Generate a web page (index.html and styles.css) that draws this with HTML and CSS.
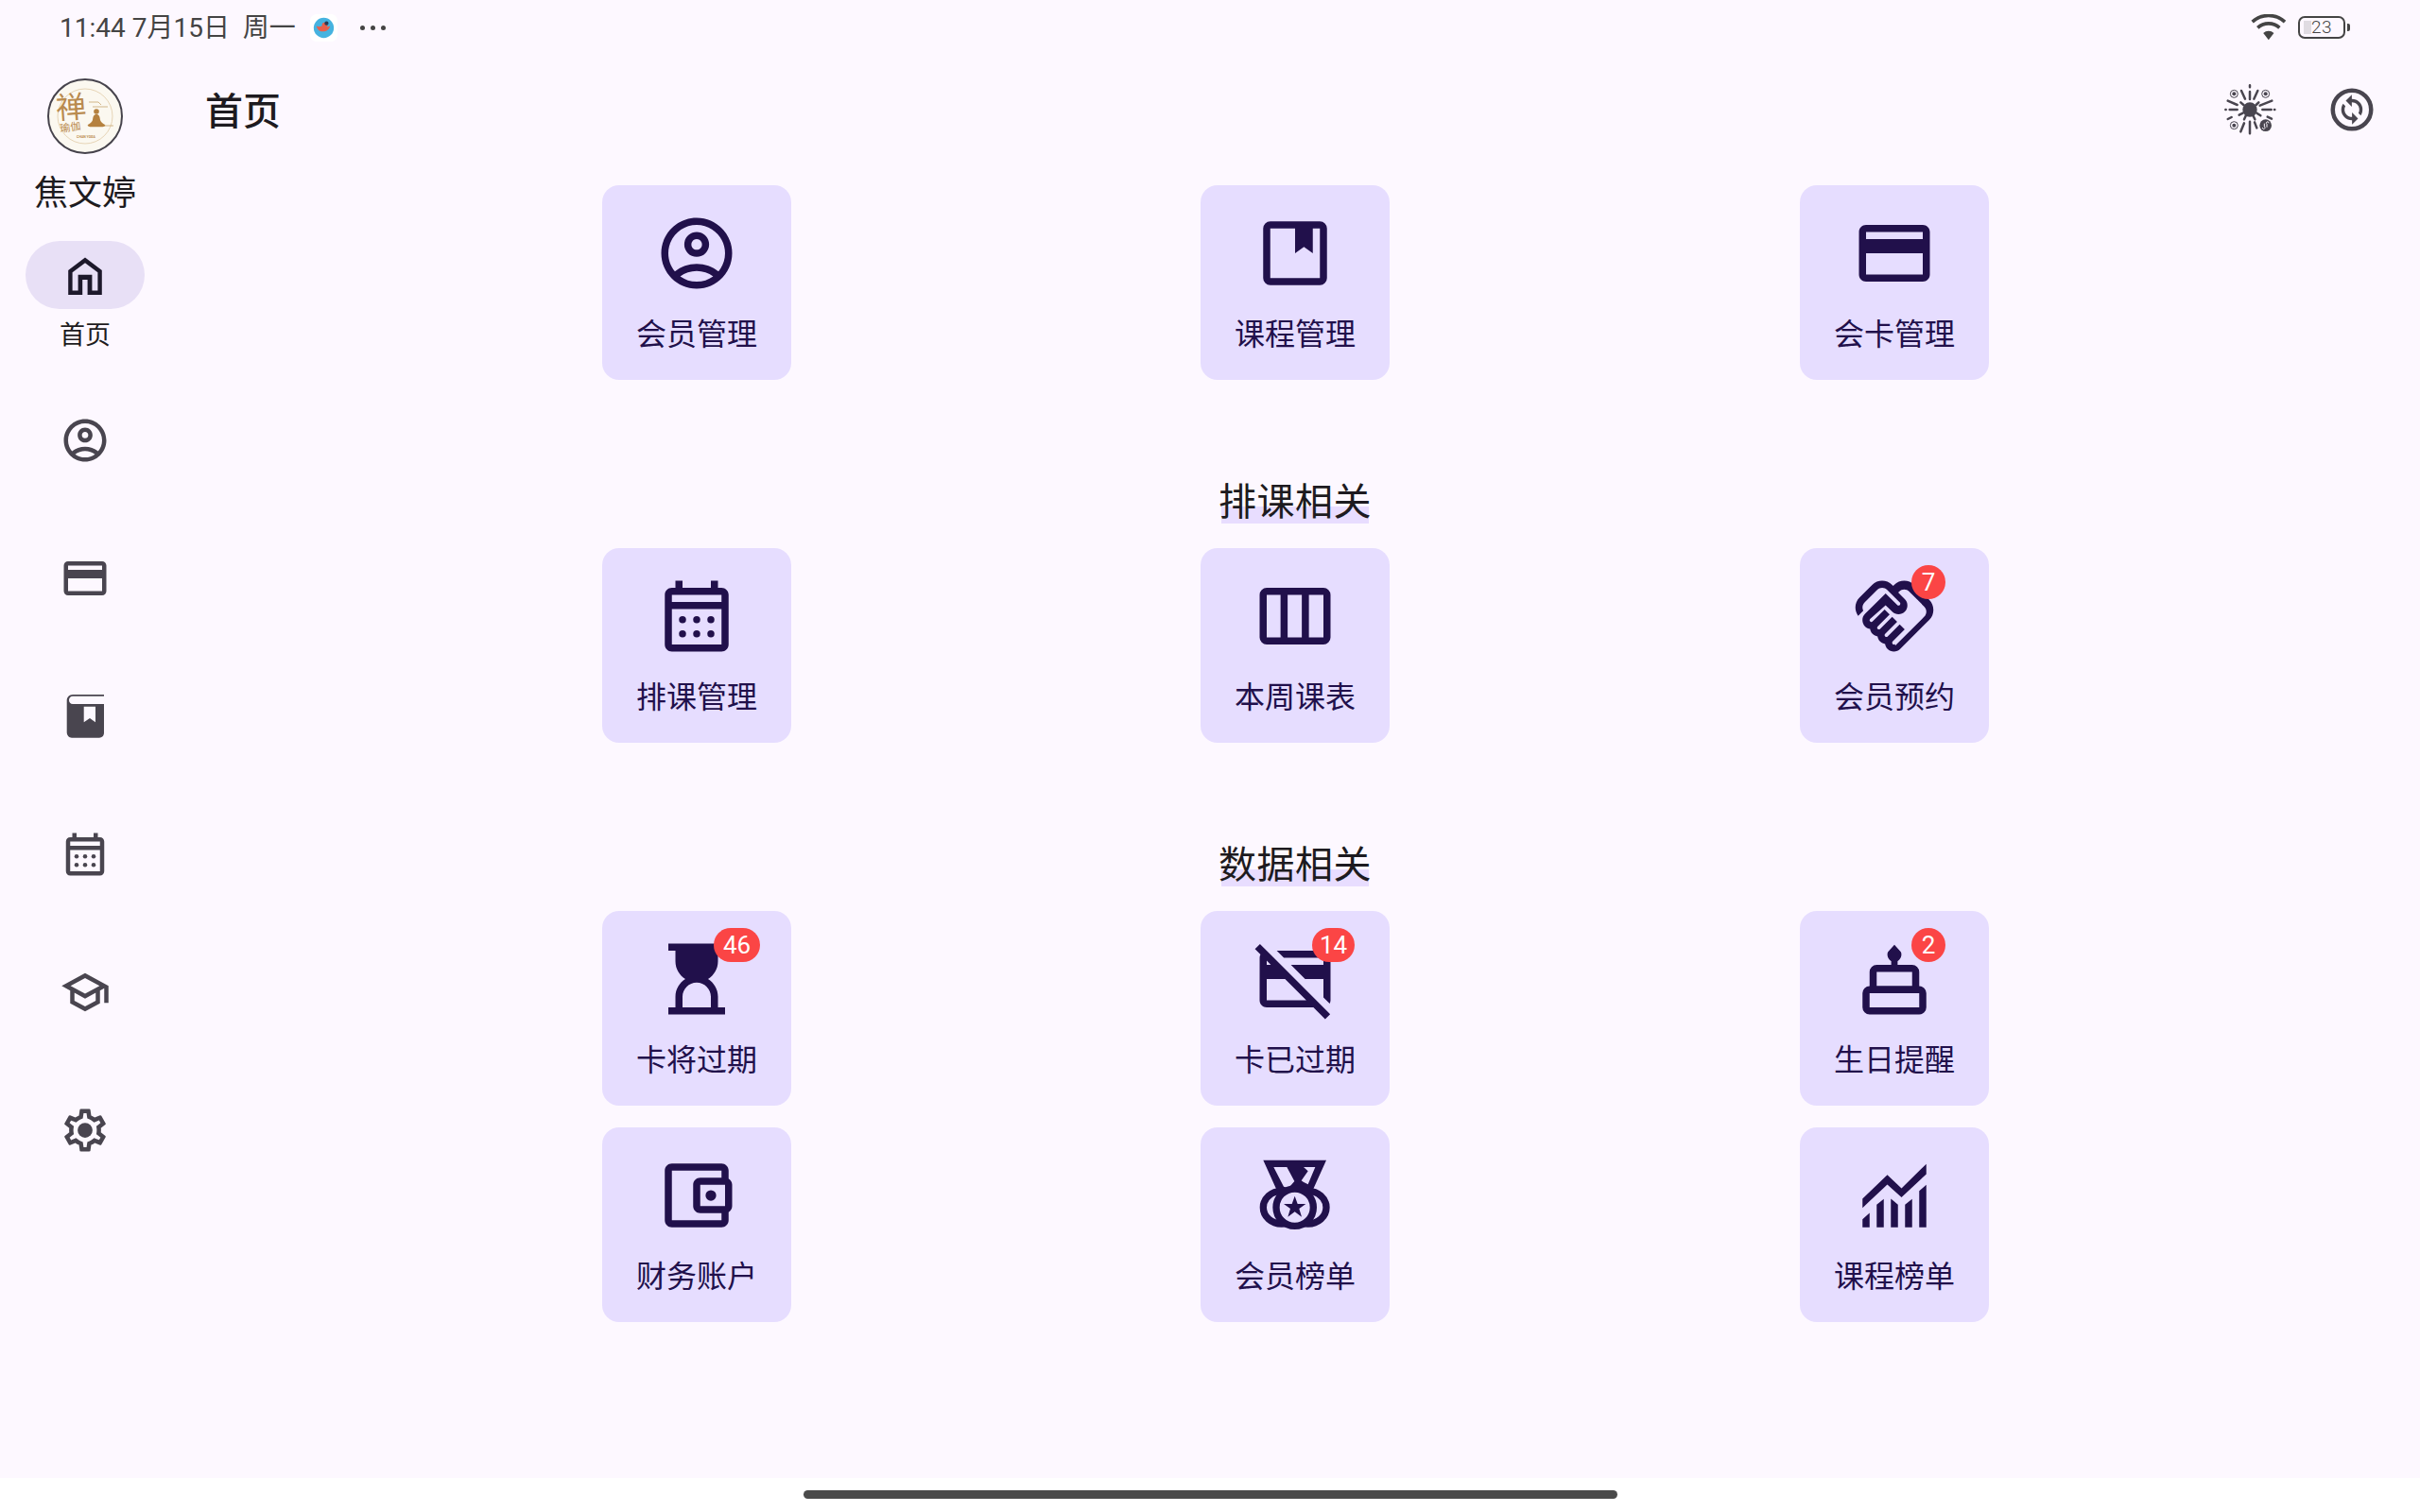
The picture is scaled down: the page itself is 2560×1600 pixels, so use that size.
FILE: index.html
```html
<!DOCTYPE html>
<html lang="zh">
<head>
<meta charset="utf-8">
<title>首页</title>
<link rel="stylesheet" href="styles.css">
</head>
<body>
<div class="screen">
  <div class="app">
    <div class="statusbar">
      <div class="status-left">
        <span class="clock">11:44 7月15日&nbsp; 周一</span>
        <svg class="app-icon" viewBox="0 0 30 30"><rect width="30" height="30" rx="7" fill="#fff"/><circle cx="15" cy="15" r="11" fill="#45b3e0"/><path d="M7 13c1 4 3 6 7 6s7-2 8-6l-3 1c0-3-1-5-3-5s-3 1-3 4c-2 1-4 1-6 0z" fill="#e8604c"/><circle cx="18" cy="10" r="2.2" fill="#2b3a55"/></svg>
        <span class="more"><i></i><i></i><i></i></span>
      </div>
      <div class="status-right">
        <svg class="wifi" viewBox="240 48 115 84"><g fill="none" stroke="#444" stroke-width="11"><path d="M245 72a78 78 0 0 1 104 0"/><path d="M262 91a52 52 0 0 1 70 0"/></g><path d="M280 108a26 26 0 0 1 34 0l-17 22z" fill="#444"/></svg>
        <div class="battery"><span class="battery-level"></span><span class="battery-num">23</span></div>
        <span class="battery-nub"></span>
      </div>
    </div>
    <div class="layout">
      <aside class="rail">
        <svg class="logo" viewBox="0 0 80 80">
          <circle cx="40" cy="40" r="39" fill="#fbf8f0" stroke="#46434c" stroke-width="2"/>
          <circle cx="40" cy="40" r="29" fill="none" stroke="#dcc49c" stroke-width=".7"/>
          <text x="0" y="0" class="logo-zen" fill="#b98a4e" transform="translate(10 43) rotate(-4)">禅</text>
          <text x="0" y="0" class="logo-yu" fill="#b98a4e" transform="translate(14 57) rotate(-8)">瑜伽</text>
          <text x="41" y="63" class="logo-en" fill="#b98a4e">CHAN YOGA</text>
          <path d="M44 25h10l3 3M48 30h16M58 50h12" fill="none" stroke="#c8a56e" stroke-width=".8"/>
          <circle cx="52" cy="35" r="2.800" fill="#b5813f"/>
          <path d="M52 38c3 0 3.500 2.500 4 6 .5 2 2 3 5 5 1 1.200-1 2.200-3 2.200H46c-2 0-4-1-3-2.200 3-2 4.500-3 5-5 .5-3.500 1-6 4-6z" fill="#b5813f"/>
        </svg>
        <div class="user-name">焦文婷</div>
        <nav class="nav">
          <div class="nav-item nav-item-active">
            <span class="nav-pill">
              <svg class="icon-home" viewBox="0 0 24 24"><path fill-rule="evenodd" d="M12 2.800l8.900 6.700V22.500h-7.600v-8h-2.700v8H3.100V9.500zM12 5.600l-6.700 5V20.300h3V11.900h7.400v8.400h3V10.600z"/></svg>
            </span>
            <span class="nav-label">首页</span>
          </div>
          <div class="nav-item">
            <svg class="icon-nav" viewBox="0 0 24 24"><path d="M12 2C6.480 2 2 6.480 2 12s4.480 10 10 10 10-4.480 10-10S17.520 2 12 2zM7.350 18.500C8.660 17.560 10.260 17 12 17s3.340.56 4.650 1.500c-1.310.94-2.910 1.500-4.650 1.500s-3.340-.56-4.650-1.500zm10.790-1.380C16.450 15.800 14.320 15 12 15s-4.450.8-6.140 2.120C4.700 15.730 4 13.950 4 12c0-4.420 3.580-8 8-8s8 3.580 8 8c0 1.950-.7 3.730-1.860 5.120z"/><path d="M12 6c-1.930 0-3.500 1.570-3.500 3.500S10.070 13 12 13s3.500-1.570 3.500-3.500S13.930 6 12 6zm0 5c-.83 0-1.500-.67-1.500-1.500S11.170 8 12 8s1.500.67 1.500 1.500S12.830 11 12 11z"/></svg>
          </div>
          <div class="nav-item">
            <svg class="icon-nav" viewBox="0 0 24 24"><path d="M20 4H4c-1.110 0-1.990.89-1.990 2L2 18c0 1.110.89 2 2 2h16c1.110 0 2-.89 2-2V6c0-1.110-.89-2-2-2zm0 14H4v-6h16v6zm0-10H4V6h16v2z"/></svg>
          </div>
          <div class="nav-item">
            <svg class="icon-book" viewBox="0 0 48 48"><path fill-rule="evenodd" d="M44 1H11C7.500 1 4.700 3.800 4.700 7.300V41c0 3 2.300 5.700 5.300 5.700h29c3 0 5-2.200 5-5.200V11H11C8.500 11 7 9 7 7c0-2.500 1.500-4.200 4-4.200h33zM22.700 13.700H35v16.600L29 26l-6.300 4.300z"/></svg>
          </div>
          <div class="nav-item">
            <svg class="icon-nav" viewBox="0 0 24 24"><path d="M19 4h-1V2h-2v2H8V2H6v2H5c-1.110 0-1.990.9-1.990 2L3 20c0 1.100.89 2 2 2h14c1.100 0 2-.9 2-2V6c0-1.100-.9-2-2-2zm0 16H5V10h14v10zm0-12H5V6h14v2z"/><circle cx="8" cy="13" r="1"/><circle cx="12" cy="13" r="1"/><circle cx="16" cy="13" r="1"/><circle cx="8" cy="17" r="1"/><circle cx="12" cy="17" r="1"/><circle cx="16" cy="17" r="1"/></svg>
          </div>
          <div class="nav-item">
            <svg class="icon-nav" viewBox="0 0 24 24"><path d="M12 3L1 9l4 2.180v6L12 21l7-3.820v-6l2-1.090V17h2V9L12 3zm6.820 6L12 12.720 5.180 9 12 5.280 18.820 9zM17 15.990l-5 2.730-5-2.730v-3.720L12 15l5-2.730v3.720z"/></svg>
          </div>
          <div class="nav-item">
            <svg class="icon-nav" viewBox="0 0 24 24"><path d="M19.430 12.980c.04-.32.07-.64.07-.98 0-.34-.03-.66-.07-.98l2.110-1.650c.19-.15.24-.42.12-.64l-2-3.460c-.09-.16-.26-.25-.44-.25-.06 0-.12.01-.17.03l-2.490 1c-.52-.4-1.080-.73-1.690-.98l-.38-2.650C14.460 2.180 14.250 2 14 2h-4c-.25 0-.46.18-.49.42l-.38 2.650c-.61.25-1.170.59-1.690.98l-2.490-1c-.06-.02-.12-.03-.18-.03-.17 0-.34.09-.43.25l-2 3.460c-.13.22-.07.49.12.64l2.110 1.650c-.04.32-.07.65-.07.98 0 .33.03.66.07.98l-2.110 1.650c-.19.15-.24.42-.12.64l2 3.460c.09.16.26.25.44.25.06 0 .12-.01.17-.03l2.490-1c.52.4 1.080.73 1.690.98l.38 2.650c.03.24.24.42.49.42h4c.25 0 .46-.18.49-.42l.38-2.650c.61-.25 1.170-.59 1.690-.98l2.490 1c.06.02.12.03.18.03.17 0 .34-.09.43-.25l2-3.460c.12-.22.07-.49-.12-.64l-2.110-1.650zm-1.980-1.710c.04.31.05.52.05.73 0 .21-.02.43-.05.73l-.14 1.130.89.7 1.080.84-.7 1.210-1.270-.51-1.040-.42-.9.68c-.43.32-.84.56-1.250.73l-1.060.43-.16 1.130-.2 1.350h-1.400l-.19-1.350-.16-1.130-1.060-.43c-.43-.18-.83-.41-1.230-.71l-.91-.7-1.060.43-1.270.51-.7-1.210 1.080-.84.89-.7-.14-1.130c-.03-.31-.05-.54-.05-.74s.02-.43.05-.73l.14-1.130-.89-.7-1.080-.84.7-1.210 1.270.51 1.040.42.9-.68c.43-.32.84-.56 1.250-.73l1.060-.43.16-1.130.2-1.350h1.390l.19 1.350.16 1.130 1.060.43c.43.18.83.41 1.230.71l.91.7 1.060-.43 1.270-.51.7 1.210-1.070.85-.89.7.14 1.130z"/><circle cx="12" cy="12" r="3.500"/></svg>
          </div>
        </nav>
      </aside>
      <main class="content">
        <header class="topbar">
          <h1 class="page-title">首页</h1>
          <div class="top-actions">
            <svg class="icon-firework" viewBox="156 263 168 168">
              <g fill="none" stroke="#49454f" stroke-width="7.500" stroke-linecap="round">
                <path d="M240 270v6M240 290v24M213 287l12 26M265 287l-12 26M170 319l30 13M310 319l-38 15M163 347h1M176 347h24M280 347h28M318 347h1M170 377l12-6M296 370l13 6M240 385v38M222 390l-11 27M255 387l7 18M211 324l9 8M268 324l-8 8M206 364l12-6M274 366l-12-8M222 378l6-13M256 378l-6-13"/>
              </g>
              <circle cx="240" cy="347" r="23" fill="#49454f"/>
              <g fill="none" stroke="#49454f" stroke-width="3"><circle cx="190" cy="297" r="12"/><circle cx="290" cy="297" r="12"/><circle cx="190" cy="397" r="12"/></g>
              <g fill="#49454f"><circle cx="190" cy="297" r="6"/><circle cx="290" cy="297" r="6"/><circle cx="190" cy="397" r="6"/><circle cx="290" cy="397" r="19"/></g>
              <path d="M280 404a4 4 0 1 0 6-3v-10M300 390a4 4 0 1 0-6 3v10" fill="none" stroke="#fdf8ff" stroke-width="3"/>
            </svg>
            <svg class="icon-nav" viewBox="0 0 24 24"><circle cx="12" cy="12" r="9" fill="none" stroke="currentColor" stroke-width="2"/><path d="M12.060 19v-2.010H12c-1.280 0-2.560-.49-3.540-1.460-1.710-1.710-1.920-4.350-.64-6.290l1.100 1.100c-.71 1.330-.53 3.010.59 4.130.7.7 1.620 1.030 2.540 1.010v-2.140l2.830 2.830L12.060 19zm4.110-4.240l-1.100-1.100c.71-1.330.53-3.010-.59-4.130C13.790 8.840 12.900 8.500 12 8.500h-.06v2.150L9.110 7.830 11.940 5v2.020c1.300-.02 2.610.45 3.600 1.450 1.700 1.700 1.910 4.340.63 6.290z"/></svg>
          </div>
        </header>
        <div class="grid">
          <a class="card"><svg class="card-icon" viewBox="0 0 24 24"><path d="M12 2C6.480 2 2 6.480 2 12s4.480 10 10 10 10-4.480 10-10S17.520 2 12 2zM7.350 18.500C8.660 17.560 10.260 17 12 17s3.340.56 4.650 1.500c-1.310.94-2.910 1.500-4.650 1.500s-3.340-.56-4.650-1.500zm10.790-1.380C16.450 15.800 14.320 15 12 15s-4.450.8-6.140 2.120C4.700 15.730 4 13.950 4 12c0-4.420 3.580-8 8-8s8 3.580 8 8c0 1.950-.7 3.730-1.860 5.120z"/><path d="M12 6c-1.930 0-3.500 1.570-3.500 3.500S10.070 13 12 13s3.500-1.570 3.500-3.500S13.930 6 12 6zm0 5c-.83 0-1.500-.67-1.500-1.500S11.170 8 12 8s1.500.67 1.500 1.500S12.830 11 12 11z"/></svg><span class="card-label">会员管理</span></a>
          <a class="card"><svg class="card-icon" viewBox="0 0 24 24"><rect x="4" y="4" width="16" height="16" rx="1" fill="none" stroke="currentColor" stroke-width="2"/><path d="M12 4h5v8l-2.500-1.800L12 12z"/></svg><span class="card-label">课程管理</span></a>
          <a class="card"><svg class="card-icon" viewBox="0 0 24 24"><path d="M20 4H4c-1.110 0-1.990.89-1.990 2L2 18c0 1.110.89 2 2 2h16c1.110 0 2-.89 2-2V6c0-1.110-.89-2-2-2zm0 14H4v-6h16v6zm0-10H4V6h16v2z"/></svg><span class="card-label">会卡管理</span></a>

          <div class="section-title"><span>排课相关</span></div>

          <a class="card"><svg class="card-icon" viewBox="0 0 24 24"><path d="M19 4h-1V2h-2v2H8V2H6v2H5c-1.110 0-1.990.9-1.990 2L3 20c0 1.100.89 2 2 2h14c1.100 0 2-.9 2-2V6c0-1.100-.9-2-2-2zm0 16H5V10h14v10zm0-12H5V6h14v2z"/><circle cx="8" cy="13" r="1"/><circle cx="12" cy="13" r="1"/><circle cx="16" cy="13" r="1"/><circle cx="8" cy="17" r="1"/><circle cx="12" cy="17" r="1"/><circle cx="16" cy="17" r="1"/></svg><span class="card-label">排课管理</span></a>
          <a class="card"><svg class="card-icon" viewBox="0 0 24 24"><rect x="3" y="5" width="18" height="14" rx="1" fill="none" stroke="currentColor" stroke-width="2"/><path d="M7.900 5h2v14h-2zM13.900 5h2v14h-2z"/></svg><span class="card-label">本周课表</span></a>
          <a class="card"><svg class="card-icon" viewBox="0 0 24 24"><path d="M12.220 19.850c-.18.18-.5.21-.71 0-.18-.18-.21-.5 0-.71l3.390-3.390-1.410-1.410-3.390 3.390c-.19.2-.51.19-.71 0-.21-.21-.18-.53 0-.71l3.390-3.390-1.410-1.410-3.390 3.390c-.18.18-.5.21-.71 0-.19-.19-.19-.51 0-.71l3.390-3.390-1.420-1.410-3.390 3.390c-.18.18-.5.21-.71 0-.19-.2-.19-.51 0-.71L9.520 8.900l1.870 1.860c.95.95 2.590.94 3.540 0 .98-.98.98-2.560 0-3.540l-1.860-1.860.28-.28c.78-.78 2.050-.78 2.830 0l4.240 4.240c.78.78.78 2.050 0 2.830l-8.200 8.200zm9.610-6.780c1.560-1.560 1.560-4.090 0-5.660l-4.240-4.240c-1.560-1.560-4.090-1.560-5.660 0l-.28.28-.28-.28c-1.560-1.560-4.090-1.560-5.660 0L2.170 6.710c-1.420 1.420-1.550 3.630-.4 5.190l1.450-1.450c-.39-.75-.26-1.700.37-2.330l3.540-3.540c.78-.78 2.050-.78 2.830 0l3.560 3.560c.18.18.21.5 0 .71-.21.21-.53.18-.71 0L9.520 5.570l-5.800 5.790c-.98.97-.98 2.560 0 3.540.39.39.89.63 1.420.7.07.52.3 1.020.7 1.420.4.4.9.63 1.420.7.07.52.3 1.020.7 1.420.4.4.9.63 1.420.7.07.54.31 1.030.7 1.420.47.47 1.100.73 1.770.73.67 0 1.300-.26 1.770-.73l8.210-8.190z"/></svg><span class="card-label">会员预约</span><span class="badge">7</span></a>

          <div class="section-title"><span>数据相关</span></div>

          <a class="card"><svg class="card-icon" viewBox="0 0 24 24"><path fill-rule="evenodd" d="M4 2h16v2h-2v3c0 2.200-1.200 4-2.800 5 1.600 1 2.800 2.800 2.800 5v3h2v2H4v-2h2v-3c0-2.200 1.200-4 2.800-5C7.200 11 6 9.200 6 7V4H4zM8 20h8v-3c0-2.200-1.800-4-4-4s-4 1.800-4 4z"/></svg><span class="card-label">卡将过期</span><span class="badge">46</span></a>
          <a class="card"><svg class="card-icon" viewBox="0 0 24 24"><path d="M6.830 4H20c1.110 0 2 .89 2 2v12c0 .34-.08.66-.23.94L20 17.170V12h-5.170l-4-4H20V6H8.830l-2-2zm13.660 19.310L17.170 20H4c-1.110 0-2-.89-2-2l.01-12c0-.34.08-.66.23-.93L.69 3.510 2.100 2.100l19.800 19.800-1.410 1.410zM4 6.830V8h1.170L4 6.830zM15.170 18l-6-6H4v6h11.170z"/></svg><span class="card-label">卡已过期</span><span class="badge badge-narrow">14</span></a>
          <a class="card"><svg class="card-icon" viewBox="0 0 24 24"><path d="M12 2.300l1.800 2c.6 1.100-.4 2.900-1.800 2.900s-2.400-1.800-1.800-2.900zM11.100 6.500h1.800V9h-1.800z"/><g fill="none" stroke="currentColor" stroke-width="2"><rect x="6" y="9" width="12" height="6" rx="1"/><rect x="4" y="15" width="16" height="6" rx="1"/></g></svg><span class="card-label">生日提醒</span><span class="badge">2</span></a>

          <a class="card"><svg class="card-icon" viewBox="0 0 24 24"><path d="M21 7.280V5c0-1.100-.9-2-2-2H5c-1.110 0-2 .9-2 2v14c0 1.100.89 2 2 2h14c1.100 0 2-.9 2-2v-2.280c.59-.35 1-.98 1-1.720V9c0-.74-.41-1.380-1-1.720zM20 9v6h-7V9h7zM5 19V5h14v2h-6c-1.100 0-2 .9-2 2v6c0 1.100.9 2 2 2h6v2H5z"/><circle cx="16" cy="12" r="1.500"/></svg><span class="card-label">财务账户</span></a>
          <a class="card"><svg class="card-icon" viewBox="16 15 270 270"><path fill-rule="evenodd" d="M50 38h200l-45 100H95zM83 60h42l24 45-19 22-15-5zM178 60h37l-23 55-15-8-6-4 21-30z"/><g fill="none" stroke="currentColor" stroke-width="22"><ellipse cx="108" cy="188" rx="58" ry="52"/><ellipse cx="192" cy="188" rx="58" ry="52"/></g><circle cx="150" cy="188" r="59" fill="#e6ddff" stroke="currentColor" stroke-width="22"/><path d="M150 152l9 25h26l-21 15 8 26-22-16-22 16 8-26-21-15h26z"/></svg><span class="card-label">会员榜单</span></a>
          <a class="card"><svg class="card-icon" viewBox="0 0 24 24"><path d="M3 12.900l7-6.700 4 3.800 7-6.900v2.900l-7 6.500-4-3.600-7 6.600zM3 18.700l2-1.800V21H3zM7 14.600l2-1.600V21H7zM11 12.900l2 1.700V21h-2zM15 14.600l2-1.600V21h-2zM19 10.700l2-1.700V21h-2z"/></svg><span class="card-label">课程榜单</span></a>
        </div>
      </main>
    </div>
  </div>
  <div class="gesture"><span class="gesture-bar"></span></div>
</div>
</body>
</html>
```

FILE: styles.css
```css
* { box-sizing: border-box; }
html, body { margin: 0; padding: 0; }
body {
  width: 2560px;
  height: 1600px;
  overflow: hidden;
  background: #fff;
  font-family: "Noto Sans CJK SC", "Noto Sans", sans-serif;
  color: #1d1b20;
}
.screen { width: 2560px; height: 1600px; display: flex; flex-direction: column; }
.app { height: 1564px; background: #fdf8ff; display: flex; flex-direction: column; }

.statusbar {
  height: 58px;
  flex: none;
  display: flex;
  align-items: center;
  justify-content: space-between;
  padding: 0 74px 0 63px;
  color: #444;
}
.status-left { display: flex; align-items: center; }
.clock { font: 400 28px/58px Roboto, "Noto Sans CJK SC", sans-serif; width: 265px; padding-top: 2px; white-space: nowrap; }
.app-icon { width: 29px; height: 29px; display: block; }
.more { display: flex; gap: 6px; margin-left: 24px; }
.more i { width: 5px; height: 5px; border-radius: 50%; background: #444; display: block; }
.status-right { display: flex; align-items: center; }
.wifi { width: 38px; height: 28px; display: block; margin-right: 12px; }
.battery {
  position: relative;
  width: 50px;
  height: 24px;
  border: 2px solid #444;
  border-radius: 7px;
  display: flex;
  align-items: center;
  justify-content: center;
}
.battery-level { position: absolute; left: 4px; top: 3px; bottom: 3px; width: 8px; background: #e0dce2; }
.battery-num { position: relative; font: 300 19px/20px Roboto, sans-serif; color: #444; letter-spacing: .5px; }
.battery-nub { width: 3px; height: 8px; margin-left: 2px; background: #444; border-radius: 0 2px 2px 0; }

.layout { flex: 1; display: flex; min-height: 0; }

.rail { width: 180px; flex: none; display: flex; flex-direction: column; padding-top: 25px; }
.logo { width: 80px; height: 80px; display: block; margin-left: 50px; flex: none; }
.logo-zen { font: 400 32px "Noto Sans CJK SC", sans-serif; }
.logo-yu { font: 400 11px "Noto Sans CJK SC", sans-serif; }
.logo-en { font: 700 3.500px Roboto, sans-serif; text-anchor: middle; }
.user-name { width: 180px; margin-top: 15px; text-align: center; font-size: 36px; line-height: 46px; font-weight: 400; }
.nav { width: 180px; margin-top: 31px; display: flex; flex-direction: column; align-items: center; }
.nav-item { height: 146px; width: 180px; display: flex; flex-direction: column; align-items: center; justify-content: center; color: #49454f; flex: none; }
.nav-item-active { height: 138px; justify-content: flex-start; }
.nav-pill { width: 126px; height: 72px; border-radius: 36px; background: #e8e0f6; display: flex; align-items: center; justify-content: center; }
.nav-label { margin-top: 9px; font-size: 27px; line-height: 34px; color: #1d1b20; }
.icon-nav { width: 54px; height: 54px; display: block; fill: currentColor; color: #49454f; }
.icon-book { width: 48px; height: 48px; display: block; fill: currentColor; color: #49454f; }
.icon-home { width: 48px; height: 48px; display: block; fill: currentColor; color: #1d192b; }

.content { flex: 1; min-width: 0; display: flex; flex-direction: column; }
.topbar { height: 116px; flex: none; display: flex; align-items: center; justify-content: space-between; padding: 0 45px 0 37px; }
.page-title { margin: -3px 0 0; font-size: 40px; line-height: 56px; font-weight: 500; }
.top-actions { display: flex; align-items: center; gap: 53px; }
.icon-firework { width: 56px; height: 56px; display: block; }

.grid {
  margin-top: 22px;
  padding-left: 241px;
  display: grid;
  grid-template-columns: 632px 634px 634px;
  justify-items: center;
  row-gap: 23px;
}
.card {
  position: relative;
  width: 200px;
  height: 206px;
  padding-top: 27px;
  border-radius: 18px;
  background: #e6ddff;
  color: #21104b;
  display: flex;
  flex-direction: column;
  align-items: center;
}
.card-icon { width: 90px; height: 90px; display: block; fill: currentColor; flex: none; }
.card-label { margin-top: 18px; font-size: 32px; line-height: 40px; white-space: nowrap; }
.badge {
  position: absolute;
  top: 18px;
  left: calc(50% + 18px);
  min-width: 36px;
  height: 36px;
  padding: 0 10px;
  border-radius: 18px;
  background: #fb4545;
  color: #fff;
  font: 400 26px/36px Roboto, sans-serif;
  text-align: center;
}
.badge-narrow { padding: 0 8px; }
.section-title {
  grid-column: 1 / -1;
  height: 132px;
  padding: 75px 2px 0 0;
  text-align: center;
  font-size: 40px;
  line-height: 56px;
  letter-spacing: .5px;
}
.section-title span {
  display: inline-block;
  height: 56px;
  background: linear-gradient(#e8ddff, #e8ddff) center 36px / 156px 18px no-repeat;
}

.gesture { flex: 1; display: flex; justify-content: center; padding-top: 13px; background: #fff; }
.gesture-bar { width: 861px; height: 9px; border-radius: 5px; background: #4a4a4a; }
```
